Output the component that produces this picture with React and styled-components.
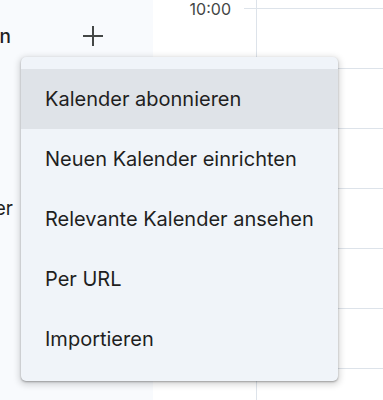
import styled, { createGlobalStyle } from "styled-components";

const GlobalStyle = createGlobalStyle`
  html, body {
    margin: 0;
    padding: 0;
    background: #ffffff;
    font-family: Inter, Roboto, "Noto Sans", Arial, sans-serif;
  }
`;

const hours = ["10:00", "11:00", "12:00", "13:00", "14:00", "15:00", "16:00"];

const menuItems = [
  "Kalender abonnieren",
  "Neuen Kalender einrichten",
  "Relevante Kalender ansehen",
  "Per URL",
  "Importieren",
];

const PlusIcon = () => (
  <svg width="20" height="20" viewBox="0 0 20 20" fill="#444746">
    <path d="M9 0h2v9h9v2h-9v9H9v-9H0V9h9z" />
  </svg>
);

const App = () => {
  return (
    <>
      <GlobalStyle />
      <Page>
        <Sidebar>
          <SectionHeader>
            <Clip $width={11}>
              <HeaderText>Kalender hinzufügen</HeaderText>
            </Clip>
            <IconButton>
              <PlusIcon />
            </IconButton>
          </SectionHeader>
          <CalendarRow>
            <Clip $width={13}>
              <CalendarText>Meine Kalender</CalendarText>
            </Clip>
          </CalendarRow>
        </Sidebar>

        <Main>
          <Gutter>
            {hours.map((h) => (
              <GutterRow key={h}>
                <TimeLabel>{h}</TimeLabel>
                <Tick />
              </GutterRow>
            ))}
          </Gutter>
          <Grid>
            {hours.map((h) => (
              <GridRow key={h} />
            ))}
          </Grid>
        </Main>

        <Menu>
          {menuItems.map((item, i) => (
            <MenuItem key={item} $active={i === 0}>
              {item}
            </MenuItem>
          ))}
        </Menu>
      </Page>
    </>
  );
};

export default App;

const Page = styled.div`
  position: relative;
  display: flex;
  width: 383px;
  height: 400px;
  overflow: hidden;
`;

const Sidebar = styled.div`
  width: 153px;
  flex-shrink: 0;
  background: #f8fafd;
  display: flex;
  flex-direction: column;
`;

const SectionHeader = styled.div`
  display: flex;
  align-items: center;
  height: 32px;
  margin-top: 20px;
`;

const Clip = styled.div`
  width: ${({ $width }) => $width}px;
  overflow: hidden;
  display: flex;
  justify-content: flex-end;
  white-space: nowrap;
  flex-shrink: 0;
`;

const HeaderText = styled.span`
  font-size: 19px;
  font-weight: 500;
  color: #1f1f1f;
  flex-shrink: 0;
`;

const CalendarText = styled.span`
  font-size: 19px;
  color: #1f1f1f;
  flex-shrink: 0;
`;

const IconButton = styled.button`
  background: none;
  border: none;
  padding: 0;
  margin-left: 72px;
  display: flex;
  align-items: center;
  cursor: pointer;
`;

const CalendarRow = styled.div`
  display: flex;
  align-items: center;
  height: 32px;
  margin-top: 140px;
`;

const Main = styled.div`
  flex: 1;
  display: flex;
  background: #ffffff;
`;

const Gutter = styled.div`
  width: 103px;
  flex-shrink: 0;
  padding-top: 8px;
`;

const GutterRow = styled.div`
  height: 60px;
  display: flex;
  align-items: flex-start;
  justify-content: flex-end;
`;

const TimeLabel = styled.span`
  margin-top: -8px;
  margin-right: 13px;
  font-size: 16px;
  line-height: 18px;
  color: #444746;
`;

const Tick = styled.div`
  width: 12px;
  border-top: 1px solid #dde3ea;
`;

const Grid = styled.div`
  flex: 1;
  border-left: 1px solid #dde3ea;
  padding-top: 8px;
`;

const GridRow = styled.div`
  height: 59px;
  border-top: 1px solid #dde3ea;
`;

const Menu = styled.ul`
  position: absolute;
  left: 21px;
  top: 57px;
  width: 317px;
  margin: 0;
  padding: 12px 0;
  list-style: none;
  background: #f0f4f9;
  border-radius: 5px;
  box-shadow: 0 1px 2px rgba(0, 0, 0, 0.3), 0 2px 6px 2px rgba(0, 0, 0, 0.15);
`;

const MenuItem = styled.li`
  height: 60px;
  display: flex;
  align-items: center;
  padding-left: 24px;
  font-size: 20px;
  color: #1f1f1f;
  background: ${({ $active }) => ($active ? "#dfe3e8" : "transparent")};
  cursor: pointer;
`;
